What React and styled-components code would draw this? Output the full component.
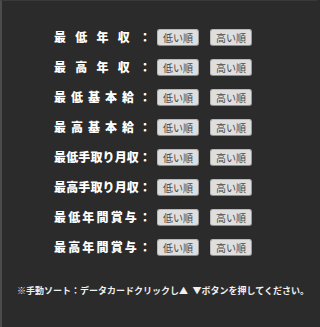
import React from "react";
import styled, { createGlobalStyle } from "styled-components";

const GlobalStyle = createGlobalStyle`
  html, body {
    margin: 0;
    padding: 0;
    background: #2b2b2b;
  }
  body {
    font-family: "Noto Sans CJK JP", "Liberation Sans", sans-serif;
  }
`;

const items = [
  "最低年収：",
  "最高年収：",
  "最低基本給：",
  "最高基本給：",
  "最低手取り月収：",
  "最高手取り月収：",
  "最低年間賞与：",
  "最高年間賞与：",
];

function App() {
  return (
    <Panel>
      <GlobalStyle />
      <SortList>
        {items.map((label) => (
          <SortRow key={label}>
            <Label>
              {label.split("").map((ch, i) => (
                <span key={i}>{ch}</span>
              ))}
            </Label>
            <SortButton>低い順</SortButton>
            <SortButton>高い順</SortButton>
          </SortRow>
        ))}
      </SortList>
      <Note>※手動ソート：データカードクリックし▲{"\u2002"}▼ボタンを押してください。</Note>
    </Panel>
  );
}

export default App;

const Panel = styled.div`
  box-sizing: border-box;
  width: 317px;
  height: 327px;
  background: #2b2b2b;
  border-left: 2px solid #4c4c4c;
  border-top: 1px solid #3a3a3a;
  padding-top: 21px;
`;
const SortList = styled.div`
  display: flex;
  flex-direction: column;
  padding-left: 52px;
`;
const SortRow = styled.div`
  display: flex;
  align-items: center;
  height: 30px;
`;
const Label = styled.div`
  display: flex;
  justify-content: space-between;
  width: 97px;
  margin-right: 6px;
  color: #ffffff;
  font-size: 12px;
  font-weight: 900;
  line-height: 14px;
`;
const SortButton = styled.button`
  box-sizing: border-box;
  width: 42px;
  height: 17px;
  margin: 0 11px 0 0;
  padding: 0;
  border: 1px solid #b8b8b8;
  border-bottom-color: #8c8c8c;
  border-right-color: #9a9a9a;
  border-radius: 3px;
  background: #dedede;
  color: #4a4a4a;
  font-family: "Noto Sans CJK JP", sans-serif;
  font-size: 10px;
  line-height: 15px;
`;
const Note = styled.p`
  margin: 23px 0 0 15px;
  color: #f0f0f0;
  font-size: 9px;
  font-weight: 700;
  line-height: 12px;
  white-space: nowrap;
`;
